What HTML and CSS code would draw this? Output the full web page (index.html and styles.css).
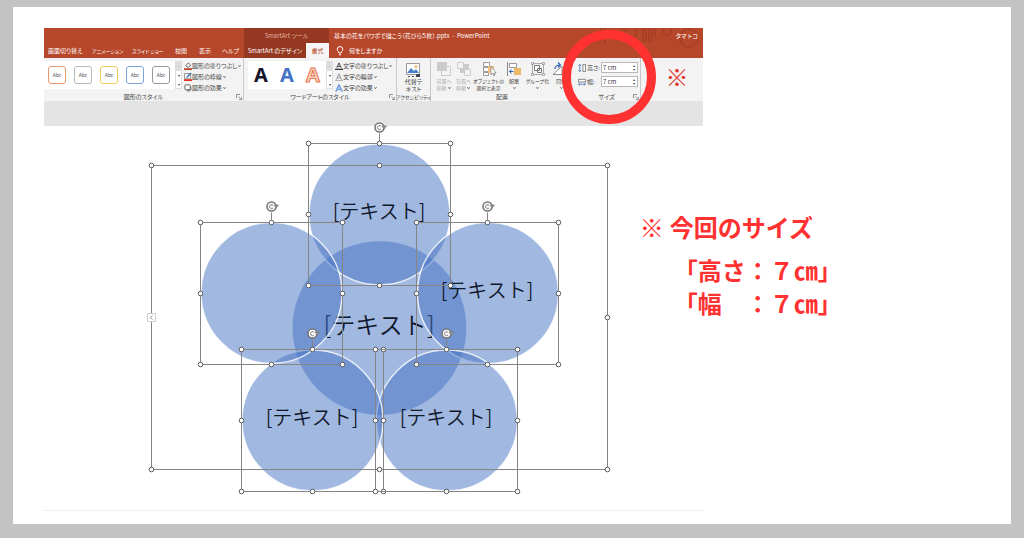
FILE: index.html
```html
<!DOCTYPE html>
<html lang="ja">
<head>
<meta charset="utf-8">
<title>基本の花をパワポで描こう</title>
<link rel="stylesheet" href="styles.css">
</head>
<body>
<main class="slide">
  <section class="app">
    <header class="titlebar">
      <svg class="titlebar-art" viewBox="0 0 110 30" aria-hidden="true"><path d="M8 0v12M12 0v16M50 0v14M53 0v14M56 0v14M59 0v14M62 0v10"/><circle cx="38" cy="4" r="6"/><circle cx="74" cy="3" r="4"/><circle cx="96" cy="10" r="9"/></svg>
      <div class="context-title">SmartArt ツール</div>
      <div class="doc-title">基本の花をパワポで描こう（花びら５枚）.pptx&nbsp; -&nbsp; PowerPoint</div>
      <div class="user">タマ トコ</div>
      <nav class="tabs">
        <button>画面切り替え</button>
        <button class="small">アニメーション</button>
        <button class="small">スライド ショー</button>
        <button>校閲</button>
        <button>表示</button>
        <button>ヘルプ</button>
      </nav>
      <nav class="context-tabs">
        <button>SmartArt のデザイン</button>
        <button class="active">書式</button>
      </nav>
      <button class="tell-me"><svg class="bulb" viewBox="0 0 8 10"><path d="M2.8 7V6C1.700 5.200 1.200 4.400 1.200 3.400a2.800 2.800 0 0 1 5.600 0c0 1-.5 1.800-1.600 2.600v1zM3 8.800h2"/></svg>何をしますか</button>
    </header>

    <div class="ribbon">
      <section class="group">
        <div class="group-body">
          <div class="gallery shapes">
            <button class="abc orange">Abc</button>
            <button class="abc gray">Abc</button>
            <button class="abc yellow">Abc</button>
            <button class="abc blue">Abc</button>
            <button class="abc dark">Abc</button>
          </div>
          <div class="scroller"><button class="off">-</button><button>▾</button><button>▾</button></div>
          <div class="menu">
            <button><svg class="icon" viewBox="0 0 9 9"><path d="M2 4l3-3 2.500 3-3 2z" fill="#fff" stroke="#555"/><path d="M0 7h9v2H0z" fill="#b7472a"/></svg>図形の塗りつぶし<i></i></button>
            <button><svg class="icon" viewBox="0 0 9 9"><path d="M.5.5h7v6h-7z" fill="#fff" stroke="#888"/><path d="M3 5l5-5" stroke="#2b6cb8" stroke-width="1.500"/><path d="M0 7h9v2H0z" fill="#e03020"/></svg>図形の枠線<i></i></button>
            <button><svg class="icon" viewBox="0 0 9 9"><path d="M3 3h5.500v3.500l-2 2H3z" fill="#999"/><rect x="1" y="1" width="6" height="5.500" rx="1" fill="#fff" stroke="#555"/></svg>図形の効果<i></i></button>
          </div>
        </div>
        <footer><span>図形のスタイル</span><button class="launch" aria-label="図形の詳細"><svg viewBox="0 0 6 6"><path d="M.5 4V.5H4M2.500 2.500l2 2M5.500 3v2.500H3"/></svg></button></footer>
      </section>

      <section class="group">
        <div class="group-body">
          <div class="gallery letters">
            <button class="wa-black">A</button>
            <button class="wa-blue">A</button>
            <button class="wa-orange">A</button>
          </div>
          <div class="scroller"><button class="off">-</button><button>▾</button><button>▾</button></div>
          <div class="menu">
            <button><svg class="icon" viewBox="0 0 9 9"><path d="M2 6.500L4.500 1 7 6.500M3 5h3" fill="none" stroke="#333"/><path d="M0 7.500h9V9H0z" fill="#333"/></svg>文字の塗りつぶし<i></i></button>
            <button><svg class="icon" viewBox="0 0 9 9"><path d="M1.500 7.500L4.500 1l3 6.500M3 5.500h3" fill="none" stroke="#888"/><path d="M0 8.500h9" stroke="#aaa"/></svg>文字の輪郭<i></i></button>
            <button><svg class="icon" viewBox="0 0 9 9"><path d="M1 8.500L4.500 1 8 8.500M3 6h3" fill="none" stroke="#9dc0ec" stroke-width="2"/><path d="M1 8.500L4.500 1 8 8.500M3 6h3" fill="none" stroke="#3d70b8" stroke-width=".6"/></svg>文字の効果<i></i></button>
          </div>
        </div>
        <footer><span>ワードアートのスタイル</span><button class="launch" aria-label="文字の詳細"><svg viewBox="0 0 6 6"><path d="M.5 4V.5H4M2.500 2.500l2 2M5.500 3v2.500H3"/></svg></button></footer>
      </section>

      <section class="group">
        <div class="group-body center">
          <button class="tall"><svg viewBox="0 0 16 16"><path d="M1.500 1.500h13v11h-13z" fill="#fff" stroke="#999"/><path d="M2 11l4-5 3 3 2-2 3 4z" fill="#4a80c4"/><circle cx="11" cy="4.500" r="1.500" fill="#f0b860"/><path d="M3 14.500h2M7 14.500h2" stroke="#555"/><path d="M11 12h4v3h-4z" fill="#445"/></svg>代替テ<br>キスト</button>
        </div>
        <footer><span class="small">アクセシビリティ</span></footer>
      </section>

      <section class="group">
        <div class="group-body arrange">
          <button class="tall" disabled><svg viewBox="0 0 16 16"><path d="M5.500 5.500h9v9h-9z" fill="#f3f3f3" stroke="#ccc"/><path d="M1 1h10v9H1z" fill="#cbcbcb"/></svg>前面へ<br>移動<i></i></button>
          <button class="tall" disabled><svg viewBox="0 0 16 16"><path d="M4 3h9v9H4z" fill="#cbcbcb"/><path d="M1.500 1.500h6v6h-6zM8.500 8.500h6v6h-6z" fill="#f3f3f3" stroke="#ccc"/></svg>背面へ<br>移動<i></i></button>
          <button class="tall"><svg viewBox="0 0 16 16"><path d="M2.500 1.500h6v4h-6zM2.500 6.500h5v4h-5zM2.500 11.500h5v3h-5z" fill="#fff" stroke="#999"/><path d="M7 5h6v7H7z" fill="#f0c27c"/><path d="M10 5v9l2-2 1 3 1-1-1-2h2z" fill="#fff" stroke="#777" stroke-width=".7"/></svg>オブジェクトの<br>選択と表示</button>
          <button class="tall"><svg viewBox="0 0 16 16"><path d="M1.500 1v14" stroke="#888"/><path d="M3.500 2.500h7v4h-7z" fill="#fff" stroke="#999"/><path d="M8 7h7v7H8z" fill="#eeba68"/><path d="M7.500 10.500h-4m2-2l-2 2 2 2" fill="none" stroke="#2b65b0"/></svg>配置<br><i></i></button>
          <button class="tall"><svg viewBox="0 0 16 16"><path d="M2.500 2.500h11v11h-11z" fill="none" stroke="#aaa"/><path d="M4.500 4.500h5v5h-5zM7.500 7.500h4v4h-4z" fill="#fff" stroke="#777"/><path d="M1.500 1.500h2v2h-2zM12.500 1.500h2v2h-2zM1.500 12.500h2v2h-2zM12.500 12.500h2v2h-2z" fill="#fff" stroke="#889" stroke-width=".7"/></svg>グループ化<br><i></i></button>
          <button class="tall"><svg viewBox="0 0 16 16"><path d="M0 13.500h9V5zM12.500 3v10.500H16" fill="#fff" stroke="#888"/><path d="M2 8c0-3 2-4 5-4M5 1.500L7.500 4 5 6.500" fill="none" stroke="#2b65b0" stroke-width="1.200"/></svg>回転<br><i></i></button>
        </div>
        <footer><span>配置</span></footer>
      </section>

      <section class="group">
        <div class="group-body size">
          <label for="h"><svg class="icon" viewBox="0 0 9 9"><path d="M2 .5v8M.5 2L2 .5 3.500 2M.5 7L2 8.500 3.500 7" fill="none" stroke="#2b65b0" stroke-width=".8"/><path d="M5.500.5h3v8h-3z" fill="#fff" stroke="#777"/></svg>高さ:</label>
          <div class="spin"><input id="h" value="7 cm"><span>▴<br>▾</span></div>
          <label for="w"><svg class="icon" viewBox="0 0 9 9"><path d="M.5 1.500h8v3h-8z" fill="#fff" stroke="#777"/><path d="M.5 7h8M2 5.500L.5 7 2 8.500M7 5.500L8.500 7 7 8.500" fill="none" stroke="#2b65b0" stroke-width=".8"/></svg>幅:</label>
          <div class="spin"><input id="w" value="7 cm"><span>▴<br>▾</span></div>
        </div>
        <footer><span>サイズ</span><button class="launch" aria-label="サイズの詳細"><svg viewBox="0 0 6 6"><path d="M.5 4V.5H4M2.500 2.500l2 2M5.500 3v2.500H3"/></svg></button></footer>
        <div class="ring"></div>
      </section>

      <div class="ribbon-mark">※</div>
    </div>

    <div class="gutter"></div>

    <svg class="canvas" viewBox="44 126 659 384">
      <defs>
        <g id="rot"><circle r="4.500" fill="#fff" stroke="#777" stroke-width="1.600"/><path d="M1.500 1.500A2 2 0 1 1 1.800 -.8" fill="none" stroke="#777"/><path d="M2.500 -1.500h4.500L4.700 1.600z" fill="#999" stroke="#777" stroke-width=".7"/></g>
        <circle id="dot" r="2.300"/>
        <g id="box">
          <path class="line" d="M-71 -71H71V71H-71zM0 -71V-81"/>
          <use href="#rot" y="-87"/>
          <g class="dots"><use href="#dot" x="-71" y="-71"/><use href="#dot" y="-71"/><use href="#dot" x="71" y="-71"/><use href="#dot" x="-71"/><use href="#dot" x="71"/><use href="#dot" x="-71" y="71"/><use href="#dot" y="71"/><use href="#dot" x="71" y="71"/></g>
        </g>
      </defs>
      <circle class="petal" cx="379.500" cy="328" r="87.500"/>
      <text class="label big" x="379" y="334">[テキスト]</text>
      <circle class="petal" cx="379.500" cy="214.500" r="70.500"/>
      <circle class="petal" cx="488" cy="293" r="70.500"/>
      <circle class="petal" cx="447" cy="420.500" r="70.500"/>
      <circle class="petal" cx="312.500" cy="420.500" r="70.500"/>
      <circle class="petal" cx="271.500" cy="293" r="70.500"/>
      <text class="label" x="379" y="219">[テキスト]</text>
      <text class="label" x="487" y="298">[テキスト]</text>
      <text class="label" x="312" y="425">[テキスト]</text>
      <text class="label" x="446" y="425">[テキスト]</text>
      <path class="line" d="M151.500 165.500H607.500V469.500H151.500z"/>
      <g class="dots"><use href="#dot" x="151.500" y="165.500"/><use href="#dot" x="379.500" y="165.500"/><use href="#dot" x="607.500" y="165.500"/><use href="#dot" x="607.500" y="317.500"/><use href="#dot" x="151.500" y="469.500"/><use href="#dot" x="379.500" y="469.500"/><use href="#dot" x="607.500" y="469.500"/></g>
      <path d="M147.500 313.500h8v8h-8z" fill="#fff" stroke="#ccc"/><path d="M152.500 315.500l-2 2 2 2" fill="none" stroke="#888"/>
      <use href="#box" x="379.500" y="214.500"/>
      <use href="#box" x="271.500" y="293.500"/>
      <use href="#box" x="487.500" y="293.500"/>
      <use href="#box" x="312.500" y="420.500"/>
      <use href="#box" x="446.500" y="420.500"/>
    </svg>
  </section>

  <aside class="notes">
    <h1><span>※</span>今回のサイズ</h1>
    <p>「高さ：７㎝」</p>
    <p>「幅　：７㎝」</p>
  </aside>
</main>
</body>
</html>
```

FILE: styles.css
```css
* { box-sizing: border-box; }
body {
  margin: 0;
  padding: 7px 13px 13px;
  min-height: 100vh;
  background: #c3c3c3;
  font-family: "Noto Sans CJK JP", sans-serif;
  color: #444;
}
button {
  border: 0;
  padding: 0;
  margin: 0;
  background: none;
  font: inherit;
  color: inherit;
  white-space: nowrap;
}
.slide {
  position: relative;
  background: #fff;
  padding: 21px 0 13px 31px;
}
.app {
  width: 68.15%;
  font-size: 6px;
  line-height: 8px;
  font-feature-settings: "palt";
}
.small { font-size: 5px; }

/* title bar */
.titlebar {
  position: relative;
  display: grid;
  grid-template-columns: 200px 85px 1fr auto;
  grid-template-rows: 15px 15px;
  background: #b7472a;
  color: #fff;
}
.titlebar-art {
  position: absolute;
  right: 0;
  top: 0;
  height: 30px;
  fill: none;
  stroke: #a94026;
  stroke-width: 2;
}
.context-title {
  grid-column: 2;
  background: #953821;
  text-align: center;
  line-height: 15px;
  color: #e5b5a5;
}
.doc-title { padding-left: 5px; line-height: 15px; white-space: nowrap; }
.user { position: relative; padding-right: 5px; line-height: 15px; }
.tabs {
  grid-row: 2;
  grid-column: 1;
  display: grid;
  grid-template-columns: 44px 40px 43px 24px 23px 1fr;
  padding-left: 4px;
}
.tabs button { text-align: left; }
.context-tabs {
  grid-row: 2;
  grid-column: 2;
  display: grid;
  grid-template-columns: 1fr 23px;
  background: #953821;
  color: #fff;
}
.context-tabs .active { background: #f5f5f5; color: #b7472a; }
.tell-me {
  grid-row: 2;
  grid-column: 3;
  display: flex;
  align-items: center;
  gap: 5px;
  padding-left: 7px;
}
.bulb { width: 8px; height: 10px; fill: none; stroke: #fff; }

/* ribbon */
.ribbon {
  display: grid;
  grid-template-columns: 200px 153px 34px 142px 68px 1fr;
  background: #f3f3f3;
}
.group {
  position: relative;
  display: flex;
  flex-direction: column;
  height: 43px;
  border-right: 1px solid #c8c8c8;
}
.group:nth-child(4) { border-right: 0; }
.group-body { flex: 1; display: flex; padding-top: 3px; }
.center { justify-content: center; }
.group footer {
  position: relative;
  height: 8px;
  white-space: nowrap;
  display: flex;
  justify-content: center;
}
.launch {
  position: absolute;
  right: 1px;
  bottom: 1px;
  width: 6px;
  height: 6px;
}
.launch svg { display: block; fill: none; stroke: #777; stroke-width: 0.8; }
.gallery {
  flex: none;
  display: flex;
  align-items: center;
  background: #fff;
  height: 28px;
}
.shapes { width: 131px; gap: 8px; padding-left: 4px; }
.abc {
  width: 18px;
  height: 18px;
  border: 1px solid;
  border-radius: 3px;
  font-size: 5px;
  color: #555;
}
.orange { border-color: #e8976a; }
.gray { border-color: #b8b8b8; }
.yellow { border-color: #f0cd58; }
.blue { border-color: #7ba3d8; }
.dark { border-color: #999; }
.letters {
  width: 78px;
  margin-left: 4px;
  justify-content: space-around;
  font: 700 20px/24px "Noto Sans", sans-serif;
}
.wa-black { color: #14142c; }
.wa-blue { color: #4472c4; }
.wa-orange { color: #fbd5c0; -webkit-text-stroke: 1px #e8754a; }
.scroller {
  flex: none;
  display: grid;
  grid-template-rows: repeat(3, 1fr);
  width: 7px;
  height: 28px;
  border: 1px solid #ddd;
  background: #fff;
  font-size: 4px;
  line-height: 8px;
}
.scroller .off { background: #ddd; }
.menu {
  display: flex;
  flex-direction: column;
  gap: 2px;
  padding-left: 2px;
}
.menu button { display: flex; align-items: center; height: 9px; }
.icon { width: 8px; height: 8px; flex: none; }
i {
  display: inline-block;
  width: 3px;
  height: 3px;
  margin: 0 0 1px 1px;
  border: solid #666;
  border-width: 0 1px 1px 0;
  transform: rotate(45deg) scale(0.7);
}
.tall { line-height: 7px; text-align: center; }
.tall svg { display: block; width: 16px; height: 16px; margin: 0 auto; }
.tall i { margin: 0 1px 1px; }
.tall:disabled { color: #aaa; }
.arrange {
  display: grid;
  grid-template-columns: 20px 19px 31px 20px 27px 20px;
  padding-left: 3px;
  align-items: start;
}
.arrange .tall { font-size: 5px; }
.size {
  display: grid;
  grid-template-columns: 23px 37px;
  align-content: start;
  row-gap: 3px;
  padding: 4px 0 0 5px;
}
.size label { display: flex; align-items: center; gap: 1px; white-space: nowrap; }
.spin {
  display: flex;
  height: 11px;
  border: 1px solid #b8b8b8;
  background: #fff;
}
.spin input {
  flex: 1;
  min-width: 0;
  border: 0;
  padding: 0 1px;
  background: none;
  font: inherit;
  color: #333;
}
.spin span { width: 6px; font-size: 4px; line-height: 4px; text-align: center; }
.ring {
  position: absolute;
  left: -11px;
  top: -28px;
  width: 94px;
  height: 94px;
  border: 9px solid #ff3131;
  border-radius: 50%;
  pointer-events: none;
}
.ribbon-mark {
  align-self: center;
  justify-self: center;
  padding: 0 0 8px 10px;
  font-size: 23px;
  line-height: 24px;
  font-weight: 500;
  color: #e0322c;
}
.gutter { height: 25px; background: #e4e4e4; }

/* drawing area */
.canvas { display: block; width: 100%; overflow: visible; border-bottom: 1px solid #efefef; }
.petal { fill: #4472c4; fill-opacity: 0.5; stroke: #fff; stroke-opacity: 0.8; stroke-width: 1.4; }
.label {
  font-size: 20px;
  font-weight: 350;
  font-feature-settings: normal;
  text-anchor: middle;
  fill: #10182c;
}
.big { font-size: 24px; }
.line { fill: none; stroke: #858585; }
.dots { fill: #fff; stroke: #5a5a5a; }

/* notes beside the drawing */
.notes {
  position: absolute;
  left: 62.8%;
  top: 203px;
  color: #ff3131;
  font-size: 24px;
  line-height: 33px;
  font-weight: 700;
}
.notes h1 { margin: 0 0 10px; font-size: 24px; line-height: 33px; display: flex; gap: 6px; }
.notes h1 span { font-weight: 400; }
.notes p { margin: 0 0 0 34px; }
```
